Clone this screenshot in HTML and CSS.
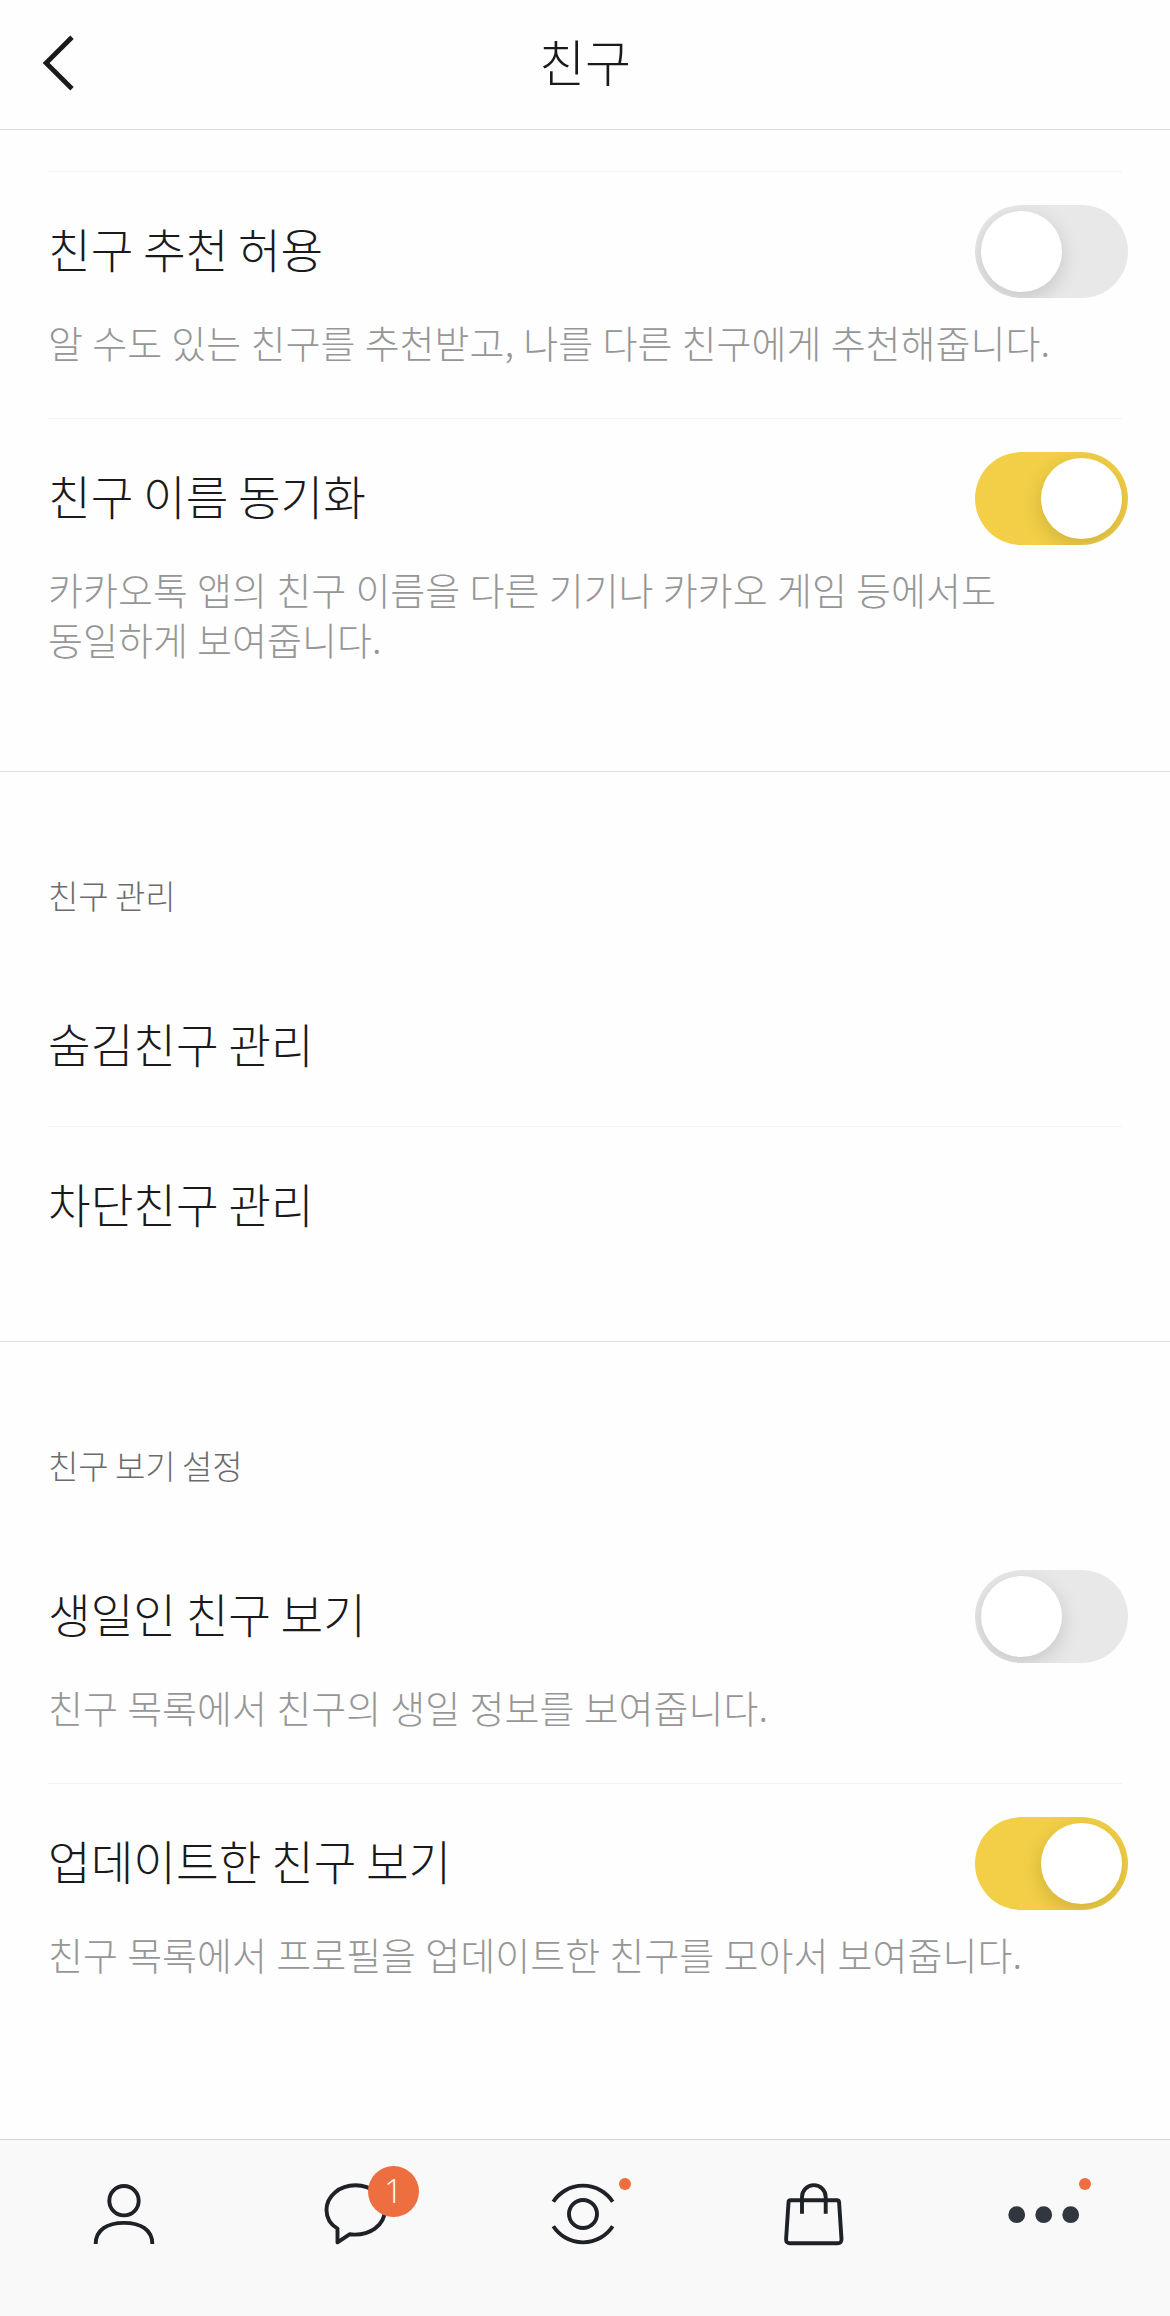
FILE: index.html
```html
<!DOCTYPE html>
<html lang="ko">
<head>
<meta charset="utf-8">
<title>친구</title>
<link rel="stylesheet" href="styles.css">
</head>
<body>
<div class="screen">
  <header class="topbar">
    <a class="back" aria-label="뒤로"><svg width="36" height="60" viewBox="0 0 36 60"><path d="M30 4.2 4.1 30 30 55.8"/></svg></a>
    <h1>친구</h1>
  </header>

  <main>
    <section class="group lead">
      <div class="item">
        <div class="row"><span class="title">친구 추천 허용</span><span class="switch"></span></div>
        <p class="desc">알 수도 있는 친구를 추천받고, 나를 다른 친구에게 추천해줍니다.</p>
      </div>
      <div class="item">
        <div class="row"><span class="title">친구 이름 동기화</span><span class="switch on"></span></div>
        <p class="desc">카카오톡 앱의 친구 이름을 다른 기기나 카카오 게임 등에서도<br>동일하게 보여줍니다.</p>
      </div>
    </section>

    <section class="group">
      <h2>친구 관리</h2>
      <div class="item link"><span class="title">숨김친구 관리</span></div>
      <div class="item link"><span class="title">차단친구 관리</span></div>
    </section>

    <section class="group">
      <h2>친구 보기 설정</h2>
      <div class="item">
        <div class="row"><span class="title">생일인 친구 보기</span><span class="switch"></span></div>
        <p class="desc">친구 목록에서 친구의 생일 정보를 보여줍니다.</p>
      </div>
      <div class="item">
        <div class="row"><span class="title">업데이트한 친구 보기</span><span class="switch on"></span></div>
        <p class="desc">친구 목록에서 프로필을 업데이트한 친구를 모아서 보여줍니다.</p>
      </div>
    </section>
  </main>

  <nav class="tabs">
    <a class="tab"><svg viewBox="0 0 230 176"><circle cx="115" cy="60.7" r="14.7"/><path d="M86.7 104C86.7 90 98 82.9 115 82.9S143.3 90 143.3 104"/></svg></a>
    <a class="tab"><svg viewBox="0 0 230 176"><path stroke-linejoin="round" d="M98.5 88.6V102.4L110.5 94.3C131 96.5 145.8 85 145.8 70C145.8 56 132.5 45.3 116.5 45.3S87.5 56 87.5 70C87.5 78 91.5 84.5 98.5 88.6Z"/></svg><span class="badge">1</span></a>
    <a class="tab"><svg viewBox="0 0 230 176"><circle cx="114" cy="74" r="14"/><path d="M84.3 61.7A35.5 35.5 0 0 1 143.7 61.7M84.3 86.3A35.5 35.5 0 0 0 143.7 86.3"/></svg><span class="dot"></span></a>
    <a class="tab"><svg viewBox="0 0 230 176"><path d="M91.7 60.3H137.8Q140 60.3 140.1 62.5L142.5 99Q142.7 103.3 138.6 103.3H91Q86.9 103.3 87.1 99L89.5 62.5Q89.6 60.3 91.7 60.3Z"/><path d="M103 73.7V57A11.85 11.85 0 0 1 126.7 57V73.7"/></svg></a>
    <a class="tab"><svg class="more" viewBox="0 0 230 176"><circle cx="87.7" cy="74.7" r="8.4"/><circle cx="114.7" cy="74.7" r="8.4"/><circle cx="141.7" cy="74.7" r="8.4"/></svg><span class="dot"></span></a>
  </nav>
</div>
</body>
</html>
```
FILE: styles.css
```css
* { box-sizing: border-box; }

body {
  margin: 0;
  background: #fefefe;
  color: #1a1a1c;
  font-family: "Noto Sans CJK KR", sans-serif;
  font-weight: 300;
}

h1, h2, p { margin: 0; font-weight: 300; }

.screen {
  display: flex;
  flex-direction: column;
  width: 1170px;
  height: 2316px;
  overflow: hidden;
}

.topbar {
  display: grid;
  grid-template-columns: 108px 1fr 108px;
  align-items: center;
  height: 130px;
  padding-bottom: 3px;
  border-bottom: 1px solid #d8d8d8;
}

.back { padding-left: 42px; }
.back svg { display: block; fill: none; stroke: #1a1a1c; stroke-width: 4.8; }

.topbar h1 {
  padding-bottom: 6px;
  font-size: 50px;
  line-height: 60px;
  text-align: center;
}

main { flex: 1; }

.group {
  padding: 0 48px 55px;
  border-bottom: 1px solid #dedfe0;
}
.group.lead { padding-top: 41px; padding-bottom: 56px; }
.group:last-child { border-bottom: 0; }

.group h2 {
  height: 194px;
  padding-top: 98px;
  color: #6b6b6b;
  font-size: 33px;
  line-height: 50px;
  word-spacing: -3px;
}

.item { padding: 33px 0 49px; border-top: 1px solid #f4f4f4; }
.group h2 + .item { border-top-color: transparent; }
.item.link { display: flex; align-items: center; height: 160px; padding: 0; }

.row {
  display: flex;
  align-items: center;
  justify-content: space-between;
  height: 93px;
  margin-right: -6px;
}

.title {
  padding-bottom: 7px;
  font-size: 46.4px;
  line-height: 60px;
  word-spacing: -3.4px;
}

.desc {
  margin: 19px 0 2px;
  color: #969696;
  font-size: 38px;
  line-height: 50px;
  white-space: nowrap;
  word-spacing: -1.4px;
}

.switch {
  display: flex;
  flex: none;
  width: 153px;
  height: 93px;
  padding: 6px;
  overflow: hidden;
  border-radius: 47px;
  background: #e8e8e8;
}
.switch::before {
  content: "";
  width: 81px;
  height: 81px;
  border-radius: 50%;
  background: #fff;
  box-shadow: 0 6px 20px rgba(0, 0, 0, .15);
}
.switch.on { justify-content: flex-end; background: #f2cf46; }

.tabs {
  display: grid;
  grid-template-columns: repeat(5, 230px);
  height: 177px;
  padding-left: 9px;
  border-top: 1px solid #d6d6d6;
  background: #f9f9f9;
}
.tab { position: relative; }
.tab svg {
  display: block;
  width: 230px;
  height: 176px;
  fill: none;
  stroke: #1e2227;
  stroke-width: 3.9;
}
.tab svg.more { fill: #30373f; stroke: none; }

.badge {
  position: absolute;
  top: 26px;
  left: 129px;
  width: 51px;
  height: 51px;
  border-radius: 50%;
  background: #ed6e3e;
  color: #fff;
  font: 300 33px/50px "Open Sans", sans-serif;
  text-align: center;
}
.dot {
  position: absolute;
  top: 38px;
  left: 150px;
  width: 12px;
  height: 12px;
  border-radius: 50%;
  background: #ed6e3e;
}
```
